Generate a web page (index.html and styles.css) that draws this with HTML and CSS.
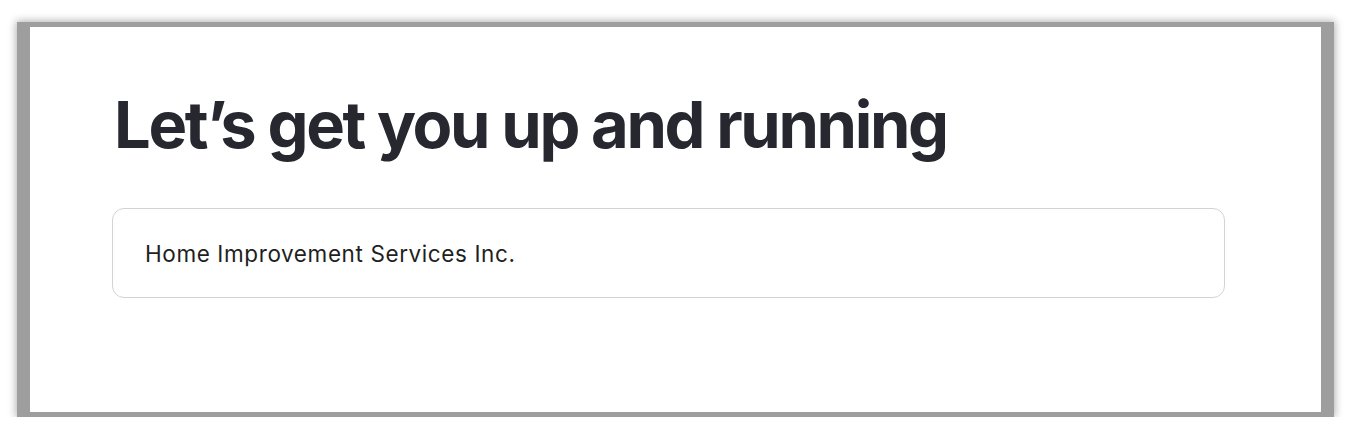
FILE: index.html
```html
<!DOCTYPE html>
<html lang="en">
<head>
<meta charset="utf-8">
<title>Let's get you up and running</title>
<link rel="stylesheet" href="styles.css">
</head>
<body>
<div class="frame">
  <main class="card">
    <h1 class="title">Let’s get you up and running</h1>
    <div class="field">Home Improvement Services Inc.</div>
  </main>
</div>
</body>
</html>
```
FILE: styles.css
```css
html, body {
  margin: 0;
  padding: 0;
  background: #ffffff;
}
body {
  font-family: Inter, "Noto Sans", sans-serif;
  padding: 22px 0 0 17px;
}
.frame {
  width: 1317px;
  height: 395px;
  box-sizing: border-box;
  padding: 5px 13px;
  background: #9e9e9e;
  box-shadow: 0 0 8px 1px #b0b0b0;
}
.card {
  background: #ffffff;
  height: 100%;
  box-sizing: border-box;
  padding: 0 0 0 82px;
}
.title {
  margin: 0;
  padding-top: 58px;
  padding-left: 2px;
  font-size: 65px;
  line-height: 80px;
  font-weight: 700;
  color: #26272f;
  letter-spacing: -2.35px;
}
.field {
  margin-top: 43px;
  width: 1113px;
  height: 90px;
  box-sizing: border-box;
  border: 1px solid #d3d3d6;
  border-radius: 12px;
  padding: 0 0 0 32px;
  display: flex;
  align-items: center;
  font-size: 22.5px;
  color: #1f1f22;
  letter-spacing: 0.6px;
}
```
